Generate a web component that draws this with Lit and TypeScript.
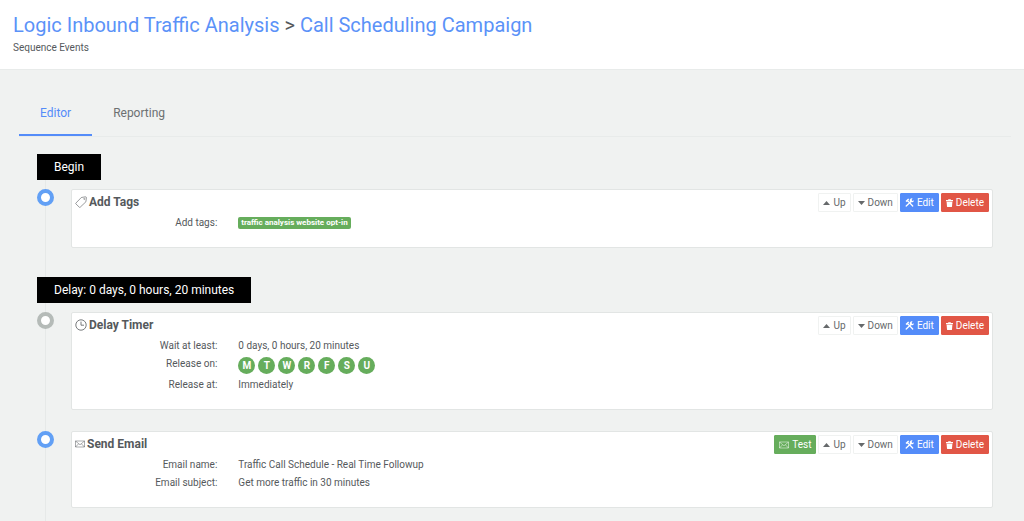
import { LitElement, html, css, svg, nothing, TemplateResult } from "lit";
import { customElement, property, state } from "lit/decorators.js";
import { classMap } from "lit/directives/class-map.js";

type IconName = "tag" | "clock" | "mail" | "up" | "down" | "tools" | "trash";

interface Field {
  label: string;
  text?: string;
  tags?: string[];
  days?: string[];
}

interface Step {
  marker?: string;
  muted?: boolean;
  icon: IconName;
  title: string;
  test?: boolean;
  fields: Field[];
}

const shapes: Record<IconName, { w: number; h: number; body: TemplateResult<2> }> = {
  tag: {
    w: 12,
    h: 12,
    body: svg`<path d="M.9 7.1 6.3 1.5 10.4.8Q11.4.8 11.4 1.8L10.9 5.8 5.2 11.2Q4.7 11.6 4.2 11.1L.9 7.9Q.5 7.5.9 7.1Z" fill="none" stroke="currentColor" stroke-width=".6"/><circle cx="9.3" cy="2.9" r=".6" fill="none" stroke="currentColor" stroke-width=".5"/>`,
  },
  clock: {
    w: 12,
    h: 12,
    body: svg`<circle cx="6" cy="6" r="5.2" fill="none" stroke="currentColor" stroke-width=".8"/><path d="M6 2.6V6.2H9" fill="none" stroke="currentColor" stroke-width=".8"/>`,
  },
  mail: {
    w: 10,
    h: 8,
    body: svg`<path d="M.5 1H9.5V7H.5ZM.5 1 5 4.8 9.5 1M.5 7 3.6 3.8M9.5 7 6.4 3.8" fill="none" stroke="currentColor" stroke-width=".5"/>`,
  },
  up: { w: 7, h: 8, body: svg`<path d="M0 6 3.5 2 7 6Z" fill="currentColor"/>` },
  down: { w: 7, h: 8, body: svg`<path d="M0 2 3.5 6 7 2Z" fill="currentColor"/>` },
  tools: {
    w: 9,
    h: 9,
    body: svg`<path d="M2.6 2.6 7.7 8" stroke="currentColor" stroke-width="1.3" stroke-linecap="round"/><path d="M.5 3 3.1.6 4.3 1.2 3 2.5 3.2 3.2 1.6 4Z" fill="currentColor"/><path d="M1.2 8 6.2 3.2" stroke="currentColor" stroke-width="1.3" stroke-linecap="round"/><path d="M7.6.5A2 2 0 1 0 8.8 2.3L7.4 2.9 6.5 2Z" fill="currentColor"/>`,
  },
  trash: {
    w: 7,
    h: 8,
    body: svg`<path d="M0 1H2.2V.2H4.8V1H7V2.2H0ZM.6 2.7H6.4L6 7.4Q5.9 8 5.3 8H1.7Q1.1 8 1 7.4Z" fill="currentColor"/>`,
  },
};

const icon = (name: IconName) => {
  const { w, h, body } = shapes[name];
  return html`<svg width=${w} height=${h} viewBox="0 0 ${w} ${h}" aria-hidden="true">${body}</svg>`;
};

const steps: Step[] = [
  {
    marker: "Begin",
    icon: "tag",
    title: "Add Tags",
    fields: [{ label: "Add tags:", tags: ["traffic analysis website opt-in"] }],
  },
  {
    marker: "Delay: 0 days, 0 hours, 20 minutes",
    muted: true,
    icon: "clock",
    title: "Delay Timer",
    fields: [
      { label: "Wait at least:", text: "0 days, 0 hours, 20 minutes" },
      { label: "Release on:", days: ["M", "T", "W", "R", "F", "S", "U"] },
      { label: "Release at:", text: "Immediately" },
    ],
  },
  {
    icon: "mail",
    title: "Send Email",
    test: true,
    fields: [
      { label: "Email name:", text: "Traffic Call Schedule - Real Time Followup" },
      { label: "Email subject:", text: "Get more traffic in 30 minutes" },
    ],
  },
];

@customElement("step-card")
export class StepCard extends LitElement {
  @property({ attribute: false }) step!: Step;

  static styles = css`
    :host {
      display: block;
      box-sizing: border-box;
      background: #fff;
      border: 1px solid #e2e5e4;
      border-radius: 2px;
      padding-bottom: 15px;
    }
    svg {
      display: block;
      flex: none;
    }
    .head {
      display: flex;
      justify-content: space-between;
      align-items: flex-start;
      padding: 3px 3px 0;
      height: 21px;
    }
    .title {
      display: flex;
      align-items: center;
      gap: 2px;
      margin: 0;
      font-size: 12px;
      line-height: 18px;
      font-weight: 700;
      color: #55595c;
    }
    .actions {
      display: flex;
      gap: 2px;
    }
    .btn {
      display: flex;
      align-items: center;
      gap: 3px;
      box-sizing: border-box;
      height: 19px;
      padding: 0 4px;
      border: 1px solid #f0f2f1;
      border-radius: 1px;
      background: #fff;
      color: #66696b;
      font: 400 10px/17px Roboto, sans-serif;
      cursor: pointer;
    }
    .test {
      background: #66ad5c;
      border-color: #66ad5c;
      color: #fff;
    }
    .edit {
      background: #548cf9;
      border-color: #548cf9;
      color: #fff;
    }
    .delete {
      background: #e15646;
      border-color: #e15646;
      color: #fff;
    }
    .fields {
      margin: 0;
    }
    .field {
      display: grid;
      grid-template-columns: 1fr 5fr;
      font-size: 10px;
      line-height: 18px;
      color: #55595c;
    }
    dt {
      text-align: right;
      padding-right: 8px;
    }
    dd {
      display: flex;
      align-items: center;
      flex-wrap: wrap;
      gap: 3px;
      margin: 0;
      padding-left: 13px;
    }
    .tag {
      padding: 0 3px;
      border-radius: 2px;
      background: #66ad5c;
      color: #fff;
      font-size: 8px;
      line-height: 12px;
      font-weight: 700;
    }
    .day {
      width: 17px;
      height: 17px;
      margin: 2px 0;
      border-radius: 50%;
      background: #66ad5c;
      color: #fff;
      font-size: 10px;
      line-height: 17px;
      font-weight: 700;
      text-align: center;
    }
  `;

  private value(f: Field) {
    if (f.tags) return f.tags.map((t) => html`<span class="tag">${t}</span>`);
    if (f.days) return f.days.map((d) => html`<span class="day">${d}</span>`);
    return f.text;
  }

  render() {
    const s = this.step;
    return html`
      <div class="head">
        <h2 class="title">${icon(s.icon)}<span>${s.title}</span></h2>
        <div class="actions">
          ${s.test ? html`<button class="btn test" type="button">${icon("mail")}Test</button>` : nothing}
          <button class="btn" type="button">${icon("up")}Up</button>
          <button class="btn" type="button">${icon("down")}Down</button>
          <button class="btn edit" type="button">${icon("tools")}Edit</button>
          <button class="btn delete" type="button">${icon("trash")}Delete</button>
        </div>
      </div>
      <dl class="fields">
        ${s.fields.map((f) => html`<div class="field"><dt>${f.label}</dt><dd>${this.value(f)}</dd></div>`)}
      </dl>
    `;
  }
}

@customElement("app-root")
export class AppRoot extends LitElement {
  @state() private tab = "Editor";

  static styles = css`
    :host {
      display: flex;
      flex-direction: column;
      min-height: 100vh;
      background: #f0f2f1;
      color: #55595c;
      font-family: Roboto, sans-serif;
    }
    .header {
      background: #fff;
      border-bottom: 1px solid #e8ebea;
      padding: 10px 13px 14px;
    }
    .heading {
      margin: 0;
      font-size: 20px;
      line-height: 30px;
      font-weight: 400;
    }
    .heading a {
      color: #5b92f8;
      text-decoration: none;
    }
    .sub {
      margin: 0;
      font-size: 10px;
      line-height: 15px;
    }
    .main {
      flex: 1;
      display: flex;
      flex-direction: column;
      padding: 19px 13px 0 19px;
    }
    .tabs {
      display: flex;
      border-bottom: 1px solid #e8ebea;
    }
    .tab {
      padding: 16px 21px 13px;
      border: 0;
      border-bottom: 2px solid transparent;
      background: none;
      color: #6c7072;
      font: 400 12px/16px Roboto, sans-serif;
      cursor: pointer;
    }
    .tab.active {
      color: #548cf9;
      border-color: #548cf9;
    }
    .timeline {
      flex: 1;
      list-style: none;
      margin: 17px 18px 0;
      padding: 0 0 14px;
      background: linear-gradient(#e6e9e8, #e6e9e8) 8px 0 / 1px 100% no-repeat;
    }
    .item {
      margin-bottom: 21px;
    }
    .item + .item .marker {
      margin-top: 29px;
    }
    .marker {
      width: fit-content;
      margin-bottom: 9px;
      padding: 0 17px;
      background: #000;
      color: #fff;
      font-size: 12px;
      line-height: 26px;
    }
    .row {
      display: flex;
      align-items: flex-start;
      gap: 17px;
    }
    .dot {
      flex: none;
      box-sizing: border-box;
      width: 17px;
      height: 17px;
      border: 4px solid #62a0f5;
      border-radius: 50%;
      background: #fff;
    }
    .dot.muted {
      border-color: #b5bbb8;
    }
    step-card {
      flex: 1;
      min-width: 0;
    }
  `;

  render() {
    return html`
      <header class="header">
        <h1 class="heading">
          <a href="#account">Logic Inbound Traffic Analysis</a> &gt;
          <a href="#campaign">Call Scheduling Campaign</a>
        </h1>
        <p class="sub">Sequence Events</p>
      </header>
      <main class="main">
        <div class="tabs" role="tablist">
          ${["Editor", "Reporting"].map(
            (t) => html`<button
              type="button"
              role="tab"
              aria-selected=${t === this.tab}
              class=${classMap({ tab: true, active: t === this.tab })}
              @click=${() => (this.tab = t)}
            >${t}</button>`
          )}
        </div>
        <ol class="timeline">
          ${steps.map(
            (s) => html`<li class="item">
              ${s.marker ? html`<div class="marker">${s.marker}</div>` : nothing}
              <div class="row">
                <span class=${classMap({ dot: true, muted: !!s.muted })}></span>
                <step-card .step=${s}></step-card>
              </div>
            </li>`
          )}
        </ol>
      </main>
    `;
  }
}
